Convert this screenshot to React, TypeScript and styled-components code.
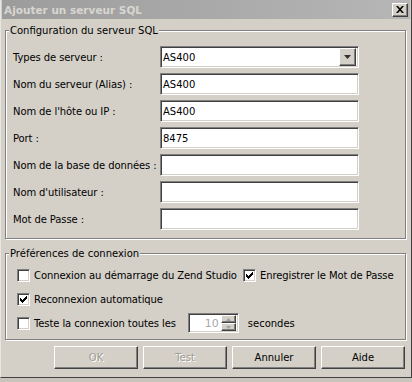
import React from "react";
import styled, { createGlobalStyle, css } from "styled-components";

const GlobalStyle = createGlobalStyle`
  html, body {
    margin: 0;
    padding: 0;
    background: #c8c4bc;
  }
  body {
    font-family: "DejaVu Sans", "Liberation Sans", sans-serif;
    font-size: 10px;
    color: #000;
  }
`;

const sunken = css`
  box-sizing: border-box;
  border: 1px solid;
  border-color: #808080 #ffffff #ffffff #808080;
  box-shadow: inset 1px 1px 0 #404040, inset -1px -1px 0 #d4d0c8;
  background: #fff;
`;

const raised = css`
  box-sizing: border-box;
  border: 1px solid;
  border-color: #ffffff #404040 #404040 #ffffff;
  box-shadow: inset -1px -1px 0 #808080;
  background: #d4d0c8;
`;

const Window = styled.div`
  width: 412px;
  height: 378px;
  box-sizing: border-box;
  background: #d4d0c8;
  border-left: 1px solid #e8e6e0;
  border-right: 1px solid #404040;
  border-bottom: 1px solid #404040;
  display: flex;
  flex-direction: column;
`;

const TitleBar = styled.div`
  height: 19px;
  margin: 0 1px;
  padding: 0 2px 0 2px;
  display: flex;
  align-items: center;
  justify-content: space-between;
  background: linear-gradient(to right, #9c9c9c, #b6b6b6);
`;

const Title = styled.span`
  color: #d8d6d0;
  font-weight: bold;
  font-size: 10.5px;
`;

const CloseButton = styled.div`
  ${raised};
  width: 16px;
  height: 14px;
  display: flex;
  align-items: center;
  justify-content: center;
`;

const Body = styled.div`
  padding: 5px 4px 0 4px;
  display: flex;
  flex-direction: column;
`;

const Group = styled.fieldset<{ $pad: string; $gap?: number }>`
  margin: ${(p) => p.$gap ?? 0}px 1px 0 0;
  padding: ${(p) => p.$pad};
  min-width: 0;
  border: 1px solid #808080;
  box-shadow: inset 1px 1px 0 #fff, 1px 1px 0 #fff;
`;

const Legend = styled.legend<{ $shift: number }>`
  padding: 0 1px;
  margin-left: ${(p) => p.$shift}px;
  line-height: 13px;
  background: #d4d0c8;
`;

const FormGrid = styled.div`
  display: grid;
  grid-template-columns: 147px 199px;
  grid-auto-rows: 22px;
  row-gap: 5px;
  align-items: center;
`;

const Label = styled.label`
  white-space: nowrap;
  letter-spacing: -0.1px;
`;

const Field = styled.div`
  ${sunken};
  height: 22px;
  padding: 0 2px;
  display: flex;
  align-items: center;
`;

const SelectField = styled(Field)`
  justify-content: space-between;
`;

const DropButton = styled.div`
  ${raised};
  width: 17px;
  height: 18px;
  display: flex;
  align-items: center;
  justify-content: center;
`;

const Options = styled.div`
  display: flex;
  flex-direction: column;
  gap: 6px;
`;

const OptionRow = styled.div`
  display: flex;
  align-items: center;
  height: 18px;
`;

const OptionCell = styled.div<{ $width?: number }>`
  display: flex;
  align-items: center;
  gap: 4px;
  letter-spacing: -0.1px;
  ${(p) => p.$width && `width: ${p.$width}px;`}
`;

const Box = styled.span`
  ${sunken};
  width: 13px;
  height: 13px;
  display: inline-flex;
  align-items: center;
  justify-content: center;
  flex: none;
`;

const Spinner = styled.div`
  ${sunken};
  width: 51px;
  height: 20px;
  margin-left: 12px;
  margin-right: 9px;
  display: flex;
  align-items: center;
  justify-content: flex-end;
  padding: 2px;
`;

const SpinValue = styled.span`
  color: #a8a8a8;
  font-size: 11px;
  padding-right: 2px;
`;

const SpinButtons = styled.div`
  display: flex;
  flex-direction: column;
  width: 15px;
  height: 16px;
`;

const SpinButton = styled.div`
  ${raised};
  flex: 1;
  display: flex;
  align-items: center;
  justify-content: center;
`;

const ButtonRow = styled.div`
  display: flex;
  justify-content: flex-end;
  gap: 5px;
  margin-top: 6px;
  padding-right: 2px;
`;

const PushButton = styled.button<{ $disabled?: boolean }>`
  ${raised};
  width: 84px;
  height: 23px;
  font-family: inherit;
  font-size: 10px;
  color: ${(p) => (p.$disabled ? "#a09c96" : "#000")};
  text-shadow: ${(p) => (p.$disabled ? "1px 1px 0 #fff" : "none")};
  padding: 0;
`;

const CheckMark = () => (
  <svg width="7" height="7" viewBox="0 0 7 7">
    <path d="M0 2h1v1h1v1h1v-1h1v-1h1v-1h1v-1h1v3h-1v1h-1v1h-1v1h-1v1h-1v-1h-1v-1h-1z" fill="#000" />
  </svg>
);

const Check = ({ checked }: { checked?: boolean }) => (
  <Box>{checked && <CheckMark />}</Box>
);

const Arrow = ({ up, color = "#000", w = 7 }: { up?: boolean; color?: string; w?: number }) => {
  const h = Math.ceil(w / 2);
  return (
    <svg width={w} height={h} viewBox={`0 0 ${w} ${h}`}>
      <polygon
        points={up ? `0,${h} ${w},${h} ${w / 2},0` : `0,0 ${w},0 ${w / 2},${h}`}
        fill={color}
      />
    </svg>
  );
};

const fields = [
  { label: "Nom du serveur (Alias) :", value: "AS400" },
  { label: "Nom de l'hôte ou IP :", value: "AS400" },
  { label: "Port :", value: "8475" },
  { label: "Nom de la base de données :", value: "" },
  { label: "Nom d'utilisateur :", value: "" },
  { label: "Mot de Passe :", value: "" },
];

export default function App() {
  return (
    <>
      <GlobalStyle />
      <Window>
        <TitleBar>
          <Title>Ajouter un serveur SQL</Title>
          <CloseButton>
            <svg width="8" height="7" viewBox="0 0 8 7">
              <path d="M0 0h2l2 2.2 2-2.2h2l-3 3.5 3 3.5h-2l-2-2.2-2 2.2h-2l3-3.5z" fill="#000" />
            </svg>
          </CloseButton>
        </TitleBar>
        <Body>
          <Group $pad="9px 0 8px 7px">
            <Legend $shift={-4}>Configuration du serveur SQL</Legend>
            <FormGrid>
              <Label>Types de serveur :</Label>
              <SelectField>
                <span>AS400</span>
                <DropButton>
                  <Arrow color="#303030" />
                </DropButton>
              </SelectField>
              {fields.map((f) => (
                <React.Fragment key={f.label}>
                  <Label>{f.label}</Label>
                  <Field>{f.value}</Field>
                </React.Fragment>
              ))}
            </FormGrid>
          </Group>
          <Group $pad="6px 0 7px 11px" $gap={8}>
            <Legend $shift={-8}>Préférences de connexion</Legend>
            <Options>
              <OptionRow>
                <OptionCell $width={226}>
                  <Check />
                  <span>Connexion au démarrage du Zend Studio</span>
                </OptionCell>
                <OptionCell>
                  <Check checked />
                  <span>Enregistrer le Mot de Passe</span>
                </OptionCell>
              </OptionRow>
              <OptionRow>
                <OptionCell>
                  <Check checked />
                  <span>Reconnexion automatique</span>
                </OptionCell>
              </OptionRow>
              <OptionRow>
                <OptionCell>
                  <Check />
                  <span>Teste la connexion toutes les</span>
                </OptionCell>
                <Spinner>
                  <SpinValue>10</SpinValue>
                  <SpinButtons>
                    <SpinButton>
                      <Arrow up w={5} color="#a0a0a0" />
                    </SpinButton>
                    <SpinButton>
                      <Arrow w={5} color="#a0a0a0" />
                    </SpinButton>
                  </SpinButtons>
                </Spinner>
                <span>secondes</span>
              </OptionRow>
            </Options>
          </Group>
          <ButtonRow>
            <PushButton $disabled>OK</PushButton>
            <PushButton $disabled>Test</PushButton>
            <PushButton>Annuler</PushButton>
            <PushButton>Aide</PushButton>
          </ButtonRow>
        </Body>
      </Window>
    </>
  );
}
